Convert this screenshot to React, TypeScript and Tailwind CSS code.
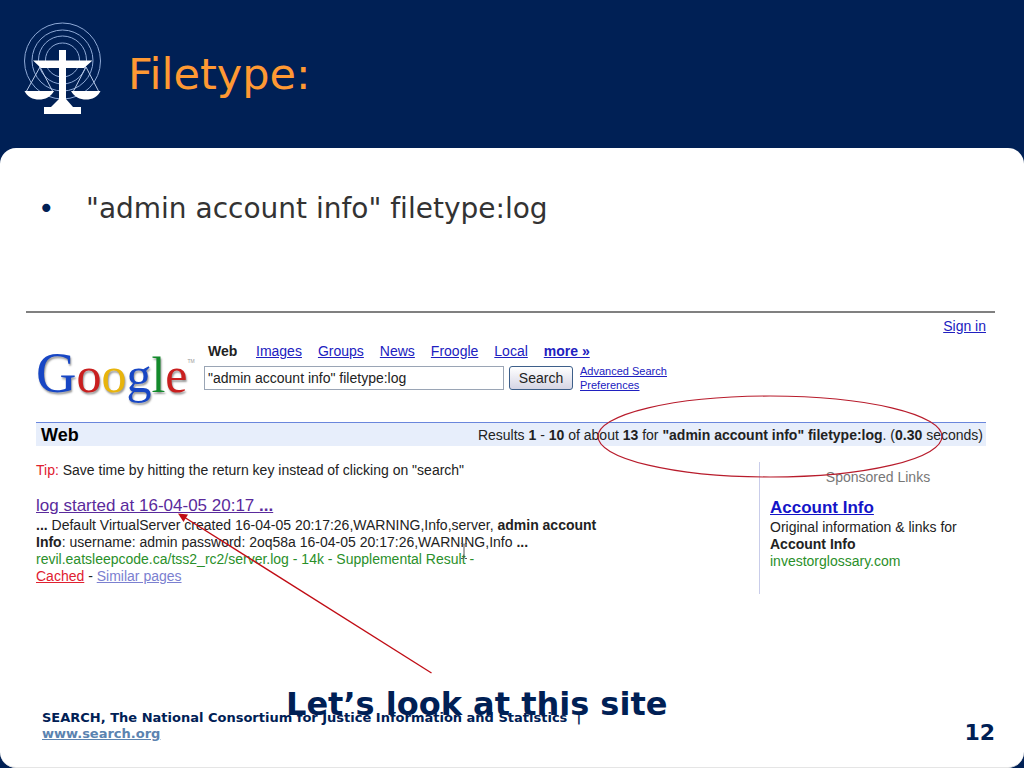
import React from "react";

const navLinks = ["Images", "Groups", "News", "Froogle", "Local"];

function ScalesLogo() {
  return (
    <svg viewBox="0 0 80 94" className="h-[94px] w-20 shrink-0" role="img" aria-label="SEARCH scales of justice">
      <g fill="none" stroke="#8ea9d6" strokeWidth="1">
        <circle cx="39.5" cy="39" r="38" />
        <circle cx="39.5" cy="38.5" r="30.5" />
        <circle cx="39.5" cy="38" r="24" />
        <circle cx="39.5" cy="38" r="17" />
      </g>
      <g fill="none" stroke="#b9cae8" strokeWidth="1">
        <path d="M17 45 L3 70 M17 45 L30 70" />
        <path d="M63 45 L50 70 M63 45 L76 70" />
      </g>
      <g fill="#ffffff">
        <path d="M36 28 H43 V38.500 H69.500 L61 46 H43 V77 L50 85 H58 V92 H21 V85 H28 L36 77 V46 H18 L10 38.500 H36 Z" />
        <path d="M1.500 69 H31 C28 75 22 77.500 16 77.500 C10 77.500 4 75 1.500 69 Z" />
        <path d="M48 69 H77.500 C75 75 69 77.500 63 77.500 C57 77.500 51 75 48 69 Z" />
      </g>
    </svg>
  );
}

function GoogleLogo() {
  return (
    <div className="flex w-[168px] shrink-0 items-baseline pt-0.5 font-['Liberation_Serif',serif] text-[50px] leading-[60px] [text-shadow:1px_2px_2px_#999999]">
      <span className="text-[56px] text-[#1746c4]">G</span>
      <span className="text-[#c91f1f]">o</span>
      <span className="text-[#e8b40c]">o</span>
      <span className="text-[#1746c4]">g</span>
      <span className="text-[#138a2b]">l</span>
      <span className="text-[#c91f1f]">e</span>
      <span className="self-start pt-3 font-['Liberation_Sans',sans-serif] text-[5px] leading-3 text-[#999999] [text-shadow:none]">
        TM
      </span>
    </div>
  );
}

function SearchHeader() {
  return (
    <div className="flex h-[65px]">
      <GoogleLogo />
      <div>
        <nav className="flex gap-4 pl-1 leading-5">
          <b className="w-8">Web</b>
          {navLinks.map((label) => (
            <a key={label} href="#" className="text-[#2020c0] underline">
              {label}
            </a>
          ))}
          <a href="#" className="font-bold text-[#2020c0] underline">
            more »
          </a>
        </nav>
        <form className="flex items-center pt-[3px]" onSubmit={(e) => e.preventDefault()}>
          <input
            type="text"
            aria-label="Search query"
            defaultValue={'"admin account info" filetype:log'}
            className="h-6 w-[300px] border border-[#9aa5b5] bg-white px-[3px] text-sm text-[#222222]"
          />
          <button
            type="submit"
            className="ml-[5px] h-6 w-16 rounded-[3px] border border-[#3d5f8a] bg-linear-to-b from-white to-[#d5d5e4] text-sm leading-5 text-[#222222]"
          >
            Search
          </button>
          <div className="ml-[7px] flex flex-col text-[11px] leading-[14px] text-[#2020c0] underline">
            <a href="#">Advanced Search</a>
            <a href="#">Preferences</a>
          </div>
        </form>
      </div>
    </div>
  );
}

function Result() {
  return (
    <article className="max-w-[570px] pt-4 leading-[17px]">
      <h2 className="text-[17px] leading-[22px]">
        <a href="#" className="text-[#5a2a9c] underline">
          log started at 16-04-05 20:17 <b>...</b>
        </a>
      </h2>
      <p>
        <b>...</b> Default VirtualServer created 16-04-05 20:17:26,WARNING,Info,server, <b>admin account Info</b>:
        username: admin password: 2oq58a 16-04-05 20:17:26,WARNING,Info <b>...</b>
      </p>
      <p className="text-[#2a8f2a]">revil.eatsleepcode.ca/tss2_rc2/server.log - 14k - Supplemental Result -</p>
      <p>
        <a href="#" className="text-[#e02030] underline">
          Cached
        </a>{" "}
        -{" "}
        <a href="#" className="text-[#7b80d0] underline">
          Similar pages
        </a>
      </p>
    </article>
  );
}

function Sponsored() {
  return (
    <aside className="h-[132px] w-[227px] shrink-0 border-l border-[#c9cdea] pl-2.5 leading-[17px]">
      <p className="pt-[5px] text-center leading-5 text-[#777777]">Sponsored Links</p>
      <h3 className="pt-[10px] text-[17px] leading-[22px] font-bold">
        <a href="#" className="text-[#1414c8] underline">
          Account Info
        </a>
      </h3>
      <p>Original information &amp; links for</p>
      <p className="font-bold">Account Info</p>
      <p className="text-[#2a8f2a]">investorglossary.com</p>
    </aside>
  );
}

function Annotations() {
  return (
    <>
      <svg className="absolute top-[82px] right-[52px] h-[83px] w-[346px]" viewBox="0 0 346 83" aria-hidden="true">
        <ellipse cx="173" cy="41.500" rx="172" ry="40.500" fill="none" stroke="#b81c2c" strokeWidth="1.200" />
      </svg>
      <svg className="absolute top-[198px] left-[150px] h-[165px] w-[260px]" viewBox="0 0 260 165" aria-hidden="true">
        <path d="M8 6 L255.500 162" stroke="#c00c14" strokeWidth="1.300" />
        <path d="M2 2.500 L12 3.500 L7.500 11 Z" fill="#c00c14" />
      </svg>
      <svg className="absolute top-[229px] left-[433px] h-[18px] w-[10px]" viewBox="0 0 10 18" aria-hidden="true">
        <path d="M2 1.500 H4 L5 2.500 L6 1.500 H8 M5 2.500 V15.500 M2 16.500 H4 L5 15.500 L6 16.500 H8" fill="none" stroke="#555555" />
      </svg>
      <p className="absolute top-[371px] left-[260px] font-['DejaVu_Sans',sans-serif] text-[32px] leading-[40px] font-bold whitespace-nowrap text-[#002055]">
        Let’s look at this site
      </p>
    </>
  );
}

export default function App() {
  return (
    <div className="flex min-h-screen flex-col bg-[#002055] font-['DejaVu_Sans',sans-serif] [font-variant-ligatures:none]">
      <header className="flex h-[148px] items-start pt-[22px] pl-[23px]">
        <ScalesLogo />
        <h1 className="pt-[27px] pl-[25px] text-[43px] leading-[50px] text-[#ff9933]">Filetype:</h1>
      </header>

      <main className="flex flex-1 flex-col rounded-2xl border-b border-[#e5e5e5] bg-white pt-[41px]">
        <ul className="pl-[38px]">
          <li className="flex text-[28px] leading-10 text-[#333333]">
            <span aria-hidden="true" className="w-12 text-[#002055]">
              •
            </span>
            "admin account info" filetype:log
          </li>
        </ul>

        <section className="relative mt-[82px] mr-[29px] ml-[26px] border-t-2 border-[#808080] pr-[9px] pl-2.5 font-['Liberation_Sans',Arial,sans-serif] text-sm text-[#222222]">
          <div className="pt-[3px] text-right leading-5">
            <a href="#" className="text-[#2020c0] underline">
              Sign in
            </a>
          </div>
          <div className="pt-[5px]">
            <SearchHeader />
          </div>
          <div className="mt-4 flex h-6 items-center justify-between border-t border-[#6a86dc] bg-[#e7eefb] pr-[3px] pl-[5px]">
            <b className="text-lg text-black">Web</b>
            <p>
              Results <b>1</b> - <b>10</b> of about <b>13</b> for <b>"admin account info" filetype:log</b>. (<b>0.30</b>{" "}
              seconds)
            </p>
          </div>
          <div className="flex justify-between pt-4">
            <div>
              <p className="leading-[17px]">
                <span className="text-[#e02030]">Tip:</span> Save time by hitting the return key instead of clicking on
                "search"
              </p>
              <Result />
            </div>
            <Sponsored />
          </div>
          <Annotations />
        </section>

        <footer className="mt-auto flex items-center justify-between pr-[29px] pb-5 pl-[42px] font-bold text-[#002055]">
          <div className="text-[13px] leading-4">
            <p>SEARCH, The National Consortium for Justice Information and Statistics&nbsp; |</p>
            <a href="#" className="text-[#5b83b0] underline">
              www.search.org
            </a>
          </div>
          <span className="pt-3.5 text-[22px] leading-7">12</span>
        </footer>
      </main>
    </div>
  );
}
